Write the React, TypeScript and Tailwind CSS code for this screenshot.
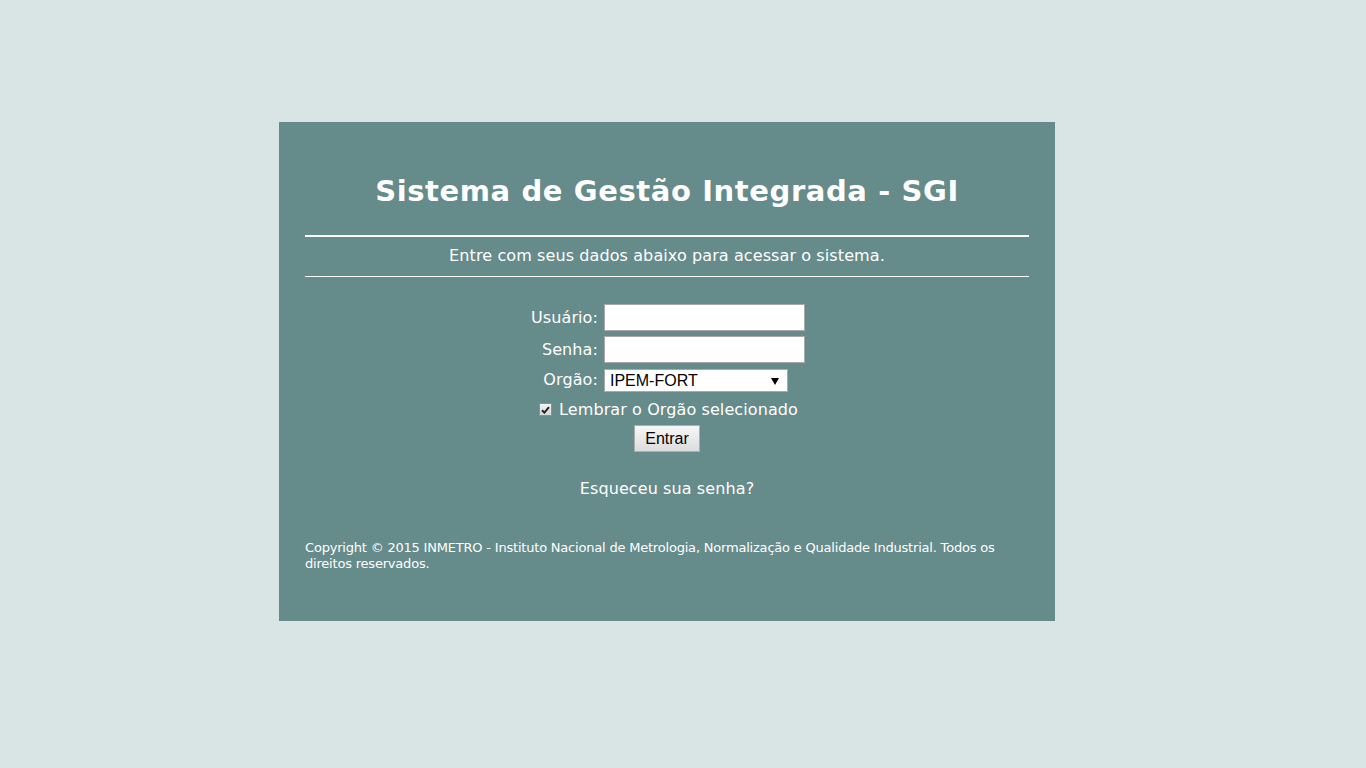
import React from 'react';

const tahoma = { fontFamily: '"DejaVu Sans", Verdana, sans-serif' };
const arial = { fontFamily: '"Liberation Sans", Arial, sans-serif' };

export default function App() {
  return (
    <div className="min-h-screen bg-[#d9e5e5] pt-[122px]" style={tahoma}>
      <div className="ml-[279px] h-[499px] w-[776px] bg-[#668b8b] px-[26px] text-white">
        <h1 className="pt-[51px] text-center text-[29px] font-bold leading-[36px] tracking-[0.6px]">
          Sistema de Gestão Integrada - SGI
        </h1>
        <div className="mt-[26px] h-[2px] bg-white"></div>
        <p className="pt-[9px] pb-[10px] text-center text-[16px] leading-[20px] tracking-[0.1px]">
          Entre com seus dados abaixo para acessar o sistema.
        </p>
        <div className="h-px bg-white"></div>

        <div className="mt-[27px] flex justify-center pl-[2px]">
          <div className="grid grid-cols-[auto_auto] items-center gap-x-[6px] gap-y-[5px] text-[16px] tracking-[0.1px]">
            <label className="text-right">Usuário:</label>
            <input
              type="text"
              className="h-[27px] w-[201px] border border-[#a9a9a9] bg-white px-1 text-black outline-none"
            />
            <label className="text-right">Senha:</label>
            <input
              type="password"
              className="h-[27px] w-[201px] border border-[#a9a9a9] bg-white px-1 text-black outline-none"
            />
            <label className="text-right">Orgão:</label>
            <div className="relative h-[23px] w-[184px]">
              <select
                defaultValue="IPEM-FORT"
                className="h-full w-full appearance-none border border-[#a9a9a9] bg-white pl-[5px] text-[16px] leading-[21px] tracking-normal text-black outline-none"
                style={arial}
              >
                <option>IPEM-FORT</option>
              </select>
              <svg
                className="pointer-events-none absolute right-[9px] top-[9px]"
                width="8"
                height="7"
                viewBox="0 0 8 7"
              >
                <path d="M0 0 H8 L4 7 Z" fill="#000" />
              </svg>
            </div>
          </div>
        </div>

        <div className="mt-[8px] flex items-center justify-center gap-[7px] pl-[3px] text-[16px] tracking-[0.1px]">
          <span className="flex h-[13px] w-[13px] items-center justify-center border border-[#8f8f8f] bg-gradient-to-b from-[#f4f4f4] to-[#d8d8d8]">
            <svg width="9" height="8" viewBox="0 0 9 8">
              <path d="M1 4.2 L3.4 6.6 L8 1.2" stroke="#222" strokeWidth="2" fill="none" />
            </svg>
          </span>
          <span className="leading-[19px]">Lembrar o Orgão selecionado</span>
        </div>

        <div className="mt-[6px] flex justify-center">
          <button
            className="h-[27px] w-[66px] border border-[#adadad] bg-gradient-to-b from-[#f7f7f7] to-[#dcdcdc] text-[16px] text-black"
            style={arial}
          >
            Entrar
          </button>
        </div>

        <p className="mt-[27px] text-center text-[16px] leading-[20px] tracking-[0.1px]">Esqueceu sua senha?</p>

        <p className="mt-[41px] text-[13px] leading-[16px] tracking-[-0.2px]">
          Copyright © 2015 INMETRO - Instituto Nacional de Metrologia, Normalização e Qualidade Industrial. Todos os
          direitos reservados.
        </p>
      </div>
    </div>
  );
}
